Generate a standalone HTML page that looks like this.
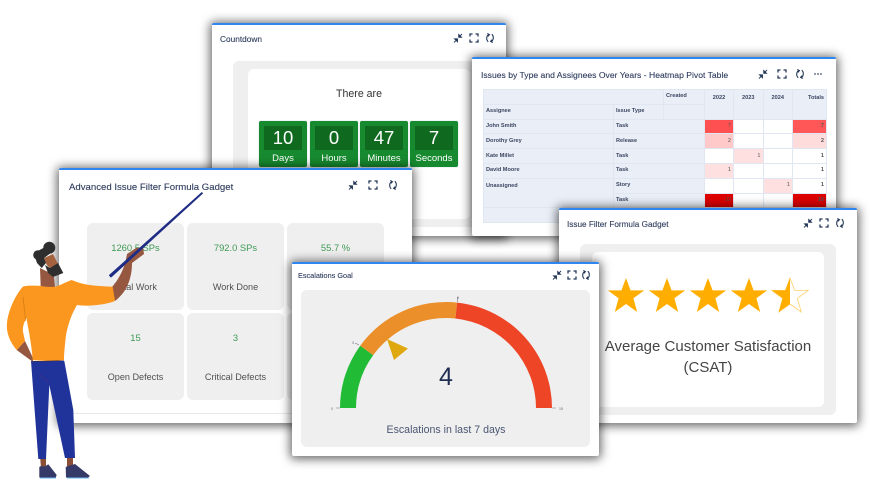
<!DOCTYPE html>
<html><head><meta charset="utf-8"><style>
html,body{margin:0;padding:0;background:#fff}
body{width:870px;height:494px;position:relative;overflow:hidden;font-family:"Liberation Sans",sans-serif;color:#444}
#r{position:absolute;left:0;top:0;width:870px;height:494px;filter:blur(.35px)}
.card{position:absolute;background:#fff;border-top:2px solid #2f86f0;box-sizing:border-box;box-shadow:0 1px 10px 2px rgba(0,0,0,.6);border-radius:2px}
.a{position:absolute;white-space:nowrap}
.t{position:absolute;color:#2c3a5c;white-space:nowrap;-webkit-text-stroke:.1px #2c3a5c}
.p{position:absolute;background:#efefef;border-radius:6px}
.w{position:absolute;background:#fff;border-radius:6px}
.tile{position:absolute;width:97px;height:87px;background:#efefef;border-radius:6px;text-align:center}
.tile b{position:absolute;left:0;right:0;top:19px;font-weight:400;font-size:9.4px;color:#3f9a55}
.tile i{position:absolute;left:0;right:0;top:59px;font-style:normal;font-size:9.1px;color:#505050}
.cd{position:absolute;top:121px;width:48px;height:46px;background:#178a2f;border-radius:2px;color:#fff;text-align:center;box-shadow:0 0 1px #9bb}
.cd b{position:absolute;left:5px;right:5px;top:5px;height:24px;line-height:24px;background:#0f6a20;font-weight:400;font-size:18.5px}
.cd i{position:absolute;left:0;right:0;top:31px;font-style:normal;font-size:9.5px;line-height:13px}
table{position:absolute;left:483px;top:89px;border-collapse:collapse;table-layout:fixed;width:343px;font-size:5.6px;font-weight:bold;color:#3b4660;background:#e9eef7}
td{border:1px solid #e0e7f2;padding:0 2px;height:13.8px;line-height:11px;overflow:hidden;vertical-align:middle}
td.n{text-align:right;background:#fff;font-weight:normal;color:#555}
td.m{text-align:right;font-weight:bold}
td.h{vertical-align:top;text-align:center;padding-top:3px}
</style></head><body>
<svg width="0" height="0" style="position:absolute"><defs>
<g id="ic1" fill="#253858" stroke="#253858" stroke-width=".9"><path d="M1 9.500L3.500 7" /><path d="M1.500 5.800H4.500V8.800Z"/><path d="M9 1L6.500 3.500"/><path d="M5.700 1.500V4.300H8.500Z"/></g>
<g id="ic2" fill="none" stroke="#253858" stroke-width="1.3"><path d="M1 3.500V1H3.500M6.500 1H9V3.500M9 6.500V9H6.500M3.500 9H1V6.500"/></g>
<g id="ic3" fill="none" stroke="#253858" stroke-width="1.1"><path d="M3.800 1.800C1.500 2.500 .8 6.500 3.200 8.800"/><path d="M6.200 8.600C8.500 7.500 9.200 3.500 6.800 1.200"/><path d="M2.300 .5L4.400 1.700L2.900 3.400M7.700 9.500L5.600 8.300L7.100 6.600"/></g>
</defs></svg>
<div id="r">

<!-- Countdown -->
<div class="card" style="left:212px;top:23px;width:294px;height:213px"></div>
<div class="t" style="left:220px;top:34px;font-size:8.3px">Countdown</div>
<svg class="a" style="left:453px;top:33px" width="42" height="11"><use href="#ic1"/><use href="#ic2" x="16"/><use href="#ic3" x="32"/></svg>
<div class="p" style="left:233px;top:61px;width:250px;height:166px"></div>
<div class="w" style="left:248px;top:69px;width:222px;height:150px"></div>
<div class="a" style="left:248px;width:222px;top:88px;text-align:center;font-size:10.6px;color:#333">There are</div>
<div class="cd" style="left:259px"><b>10</b><i>Days</i></div>
<div class="cd" style="left:310px"><b>0</b><i>Hours</i></div>
<div class="cd" style="left:360px"><b>47</b><i>Minutes</i></div>
<div class="cd" style="left:410px"><b>7</b><i>Seconds</i></div>

<!-- Heatmap -->
<div class="card" style="left:472px;top:57px;width:364px;height:179px"></div>
<div class="t" style="left:481px;top:70px;font-size:8.6px">Issues by Type and Assignees Over Years - Heatmap Pivot Table</div>
<svg class="a" style="left:758px;top:69px" width="66" height="11"><use href="#ic1"/><use href="#ic2" x="19"/><use href="#ic3" x="37"/><path d="M56 5h2M59 5h2M62 5h2" stroke="#253858" stroke-width="1.1"/></svg>
<table>
<colgroup><col style="width:130px"><col style="width:50px"><col style="width:41px"><col style="width:29px"><col style="width:29.5px"><col style="width:29.5px"><col style="width:34px"></colgroup>
<tr><td colspan="2"></td><td>Created</td><td rowspan="2" class="h">2022</td><td rowspan="2" class="h">2023</td><td rowspan="2" class="h">2024</td><td rowspan="2" class="h" style="text-align:right">Totals</td></tr>
<tr><td>Assignee</td><td>Issue Type</td><td></td></tr>
<tr><td>John Smith</td><td colspan="2">Task</td><td class="n" style="background:#fe5050">7</td><td class="n"></td><td class="n"></td><td class="n m" style="background:#ff5757">7</td></tr>
<tr><td>Dorothy Grey</td><td colspan="2">Release</td><td class="n" style="background:#ffc9c9">2</td><td class="n"></td><td class="n"></td><td class="n m" style="background:#ffdcdc">2</td></tr>
<tr><td>Kate Millet</td><td colspan="2">Task</td><td class="n"></td><td class="n" style="background:#ffe0e0">1</td><td class="n"></td><td class="n m">1</td></tr>
<tr><td>David Moore</td><td colspan="2">Task</td><td class="n" style="background:#ffe0e0">1</td><td class="n"></td><td class="n"></td><td class="n m">1</td></tr>
<tr><td rowspan="2" style="vertical-align:top;padding-top:2px">Unassigned</td><td colspan="2">Story</td><td class="n"></td><td class="n"></td><td class="n" style="background:#ffe0e0">1</td><td class="n m">1</td></tr>
<tr><td colspan="2">Task</td><td class="n" style="background:#dd0000">10</td><td class="n"></td><td class="n"></td><td class="n m" style="background:#dd0000">10</td></tr>
<tr><td colspan="7"></td></tr>
</table>

<!-- Advanced -->
<div class="card" style="left:59px;top:168px;width:353px;height:255px"></div>
<div class="t" style="left:69px;top:182px;font-size:9.6px">Advanced Issue Filter Formula Gadget</div>
<svg class="a" style="left:348px;top:180px" width="52" height="12"><use href="#ic1"/><use href="#ic2" x="20"/><use href="#ic3" x="40"/></svg>
<div class="tile" style="left:87px;top:223px"><b>1260.5 SPs</b><i>Total Work</i></div>
<div class="tile" style="left:187px;top:223px"><b>792.0 SPs</b><i>Work Done</i></div>
<div class="tile" style="left:287px;top:223px"><b>55.7 %</b></div>
<div class="tile" style="left:87px;top:313px"><b>15</b><i>Open Defects</i></div>
<div class="tile" style="left:187px;top:313px"><b>3</b><i>Critical Defects</i></div>
<div class="tile" style="left:287px;top:313px"></div>
<div class="a" style="left:73px;top:413px;width:330px;height:1px;background:#e8e8e8"></div>

<!-- Stars -->
<div class="card" style="left:559px;top:208px;width:298px;height:215px"></div>
<div class="t" style="left:567px;top:220px;font-size:8.2px">Issue Filter Formula Gadget</div>
<svg class="a" style="left:803px;top:218px" width="42" height="11"><use href="#ic1"/><use href="#ic2" x="16"/><use href="#ic3" x="32"/></svg>
<div class="p" style="left:580px;top:244px;width:256px;height:171px"></div>
<div class="w" style="left:592px;top:252px;width:232px;height:155px"></div>
<svg class="a" style="left:600px;top:270px" width="220" height="50">
<defs><polygon id="st" points="0,-18 4.600,-5.600 18.200,-5.600 7.400,2.300 11.200,16 0,8 -11.200,16 -7.400,2.300 -18.200,-5.600 -4.600,-5.600"/>
<clipPath id="hc"><rect x="172" y="0" width="18" height="50"/></clipPath></defs>
<g fill="#ffae00"><use href="#st" x="26" y="26"/><use href="#st" x="67" y="26"/><use href="#st" x="108" y="26"/><use href="#st" x="149" y="26"/></g>
<use href="#st" x="190" y="26" fill="none" stroke="#ffcf6a" stroke-width=".8"/>
<g clip-path="url(#hc)"><use href="#st" x="190" y="26" fill="#ffae00"/></g>
</svg>
<div class="a" style="left:592px;width:232px;top:336px;text-align:center;font-size:15px;line-height:21px;color:#454545;white-space:normal">Average Customer Satisfaction<br>(CSAT)</div>

<!-- Escalations -->
<div class="card" style="left:292px;top:262px;width:307px;height:194px"></div>
<div class="t" style="left:298px;top:271px;font-size:7.3px">Escalations Goal</div>
<svg class="a" style="left:552px;top:270px" width="42" height="11"><use href="#ic1"/><use href="#ic2" x="15"/><use href="#ic3" x="29"/></svg>
<div class="p" style="left:301px;top:290px;width:289px;height:157px"></div>
<svg class="a" style="left:301px;top:290px" width="289" height="157">
<g transform="translate(145,118)">
<path d="M-106 0A106 106 0 0 1 -85.800 -62.300L-72.800 -52.900A90 90 0 0 0 -90 0Z" fill="#21bb36"/>
<path d="M-85.800 -62.300A106 106 0 0 1 11.100 -105.400L9.400 -89.500A90 90 0 0 0 -72.800 -52.900Z" fill="#ea8f2a"/>
<path d="M11.100 -105.400A106 106 0 0 1 106 0L90 0A90 90 0 0 0 9.400 -89.500Z" fill="#ee4527"/>
<polygon points="-59,-69 -38,-59.500 -52,-48" fill="#e0a80f"/>
<path d="M-110 0h4M106 0h4M11.500 -106v-5M-87 -63l-4 -2" stroke="#778" stroke-width=".6"/>
</g>
<g font-size="3.500" fill="#667"><text x="30" y="120">0</text><text x="51" y="54">3</text><text x="156" y="9">8</text><text x="258" y="120">15</text></g>
<text x="145" y="95" text-anchor="middle" font-size="25" fill="#1f2d50">4</text>
<text x="145" y="143" text-anchor="middle" font-size="10.600" fill="#4a5672">Escalations in last 7 days</text>
</svg>

<!-- Figure -->
<svg class="a" style="left:0;top:0" width="240" height="494">
<path d="M40 456H46V468H41ZM67 456H73V467H67Z" fill="#8a4d35"/>
<path d="M39.300 467L41 466L45 466.500L48.300 464.300L56.700 475L55.700 477.500H39.300Z" fill="#363a68"/>
<path d="M65.700 467L68.300 466L75 464L90 476L88 477.500H66Z" fill="#363a68"/>
<path d="M40 478H56M67 478H89" stroke="#6db8f5" stroke-width=".9"/>
<path d="M31 361H64.300L73.300 410L75 458H65L49.300 385L46 459H38.300L35 415Z" fill="#20339a"/>
<path d="M40 375L49 383" stroke="#6a2a70" stroke-width=".5" fill="none"/>
<path d="M16.700 350L25 341L33 358L33 362Z" fill="#95573f"/>
<path d="M112 287C119 279 125 268 127 254L136 248L143 247L144 254L132 263C132 278 127 292 115 301Z" fill="#95573f"/>
<path d="M40 268L40.700 287H55L54 277L48 272Z" fill="#95573f"/>
<path d="M44 258L53 254L58 264L50 268L46.700 265Z" fill="#a5623f"/>
<path d="M45 265L50 268L58 263L63.300 273L53 277L48 273Z" fill="#2e2e2e"/>
<circle cx="49.300" cy="247.700" r="6" fill="#2e2e2e"/>
<circle cx="38" cy="255" r="4.800" fill="#2e2e2e"/>
<path d="M36 252L47 246L55 250L44 258L46 263L41.700 268L37 263L35 257Z" fill="#2e2e2e"/>
<path d="M22.700 286.700C28 285 34 286 40 285.700C45 287 50 287 55 286.700C61 285 66 282 71.700 280C85 286 100 286 112.700 286.700L115 301C108 304 90 307 77 305C71 315 68 325 66 335C65 345 64 352 64 360C55 361.500 42 361 32.700 360C32 350 31 345 30 338C29 330 27 324 26.700 318C24 322 22.500 327 23 331.700L25 341L16.700 350C10 342 6 333 7 323C8 312 14 297 22.700 286.700Z" fill="#fb971f"/>
<path d="M23 297C24 306 25 313 25.500 321" stroke="#cf7a15" stroke-width=".7" fill="none"/>
<path d="M32 361.500L64 360.500" stroke="#3a2a3a" stroke-width=".6"/>
<path d="M109.500 275.300L111 277L202.500 193.300L201.700 192.700Z" fill="#1f2d85" stroke="#1f2d85" stroke-width="1" stroke-linejoin="round"/>
</svg>
</div>
</body></html>
